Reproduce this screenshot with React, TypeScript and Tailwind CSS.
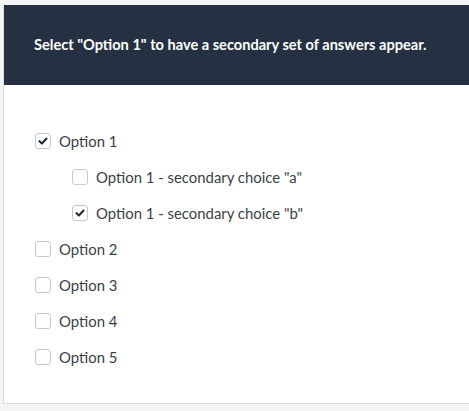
import { useState } from 'react';

type BoxProps = {
  label: string;
  checked: boolean;
  onToggle: () => void;
};

function Box({ label, checked, onToggle }: BoxProps) {
  return (
    <label className="flex items-center h-[36px] cursor-pointer select-none" onClick={onToggle}>
      <span className="w-[16px] h-[16px] rounded-[3px] border border-[#c8c8c8] bg-white flex items-center justify-center shrink-0">
        {checked && (
          <svg width="10" height="8" viewBox="0 0 10 8" fill="none">
            <path d="M1.5 4.2 L3.9 6.4 L8.5 1.6" stroke="#1f2a3a" strokeWidth="2.1" strokeLinecap="round" strokeLinejoin="round" />
          </svg>
        )}
      </span>
      <span className="ml-[8px] text-[14.9px] text-[#3a3f47] leading-none">{label}</span>
    </label>
  );
}

export default function App() {
  const [checks, setChecks] = useState<Record<string, boolean>>({
    o1: true,
    a: false,
    b: true,
    o2: false,
    o3: false,
    o4: false,
    o5: false,
  });
  const toggle = (k: string) => setChecks((c) => ({ ...c, [k]: !c[k] }));

  return (
    <div className="w-[469px] h-[411px] bg-[#f5f5f5] overflow-hidden pt-[5px] pl-[3px]" style={{ fontFamily: 'Lato, "Open Sans", sans-serif' }}>
      <div className="w-[480px] bg-white border-l border-b border-[#dcdcdc]">
        <div className="h-[80px] bg-[#253142] flex items-center pl-[30px]">
          <p className="text-white text-[14.6px] font-bold">Select "Option 1" to have a secondary set of answers appear.</p>
        </div>
        <div className="pt-[38px] pb-[28px] pl-[31px]">
          <Box label="Option 1" checked={checks.o1} onToggle={() => toggle('o1')} />
          {checks.o1 && (
            <div className="pl-[37px]">
              <Box label={'Option 1 - secondary choice "a"'} checked={checks.a} onToggle={() => toggle('a')} />
              <Box label={'Option 1 - secondary choice "b"'} checked={checks.b} onToggle={() => toggle('b')} />
            </div>
          )}
          <Box label="Option 2" checked={checks.o2} onToggle={() => toggle('o2')} />
          <Box label="Option 3" checked={checks.o3} onToggle={() => toggle('o3')} />
          <Box label="Option 4" checked={checks.o4} onToggle={() => toggle('o4')} />
          <Box label="Option 5" checked={checks.o5} onToggle={() => toggle('o5')} />
        </div>
      </div>
    </div>
  );
}
